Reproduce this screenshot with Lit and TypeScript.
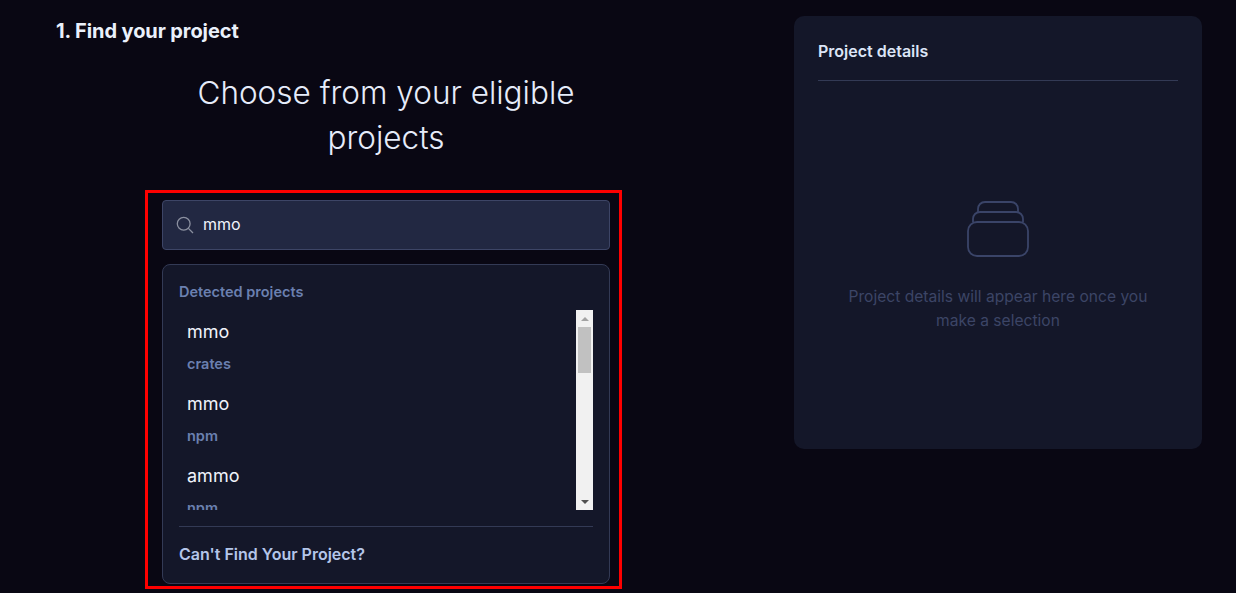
import { LitElement, html, css } from "lit";
import { customElement } from "lit/decorators.js";

const projects = [
  { name: "mmo", src: "crates" },
  { name: "mmo", src: "npm" },
  { name: "ammo", src: "npm" },
];

@customElement("app-root")
export class AppRoot extends LitElement {
  static styles = css`
    :host {
      display: block;
      width: 1236px;
      height: 593px;
      overflow: hidden;
      background: #090713;
      font-family: "Inter", "Liberation Sans", sans-serif;
      color: #e6ecfa;
    }
    .page {
      position: relative;
      display: grid;
      grid-template-columns: 772px 408px;
      column-gap: 22px;
      height: 593px;
    }
    .left {
      display: flex;
      flex-direction: column;
      align-items: center;
    }
    .step {
      align-self: flex-start;
      margin: 19px 0 0 56px;
      font-size: 20px;
      line-height: 24px;
      font-weight: 700;
      color: #eaf0fb;
      letter-spacing: -0.1px;
    }
    h1 {
      margin: 27px 0 0;
      width: 420px;
      text-align: center;
      font-family: "Inter", "Liberation Sans", sans-serif;
      font-weight: 300;
      font-size: 31.5px;
      line-height: 45px;
      color: #e6ecfa;
    }
    .search {
      box-sizing: border-box;
      width: 448px;
      height: 50px;
      margin-top: 40px;
      display: flex;
      align-items: center;
      gap: 9px;
      padding: 0 0 3px 13px;
      background: #222842;
      border: 1px solid #3d4566;
      border-radius: 4px;
      font-size: 16px;
      color: #f0f3fb;
    }
    .search svg { display: block; margin-top: 3px; }
    .card {
      box-sizing: border-box;
      width: 448px;
      height: 320px;
      margin-top: 14px;
      padding: 17px 16px 0;
      background: #141729;
      border: 1px solid #333a55;
      border-radius: 8px;
    }
    .label {
      font-size: 14.5px;
      line-height: 20px;
      font-weight: 600;
      color: #6b80b0;
    }
    .body {
      display: flex;
      height: 200px;
      margin-top: 8px;
    }
    .list {
      flex: 1;
      overflow: hidden;
      padding-left: 8px;
    }
    .item {
      box-sizing: border-box;
      height: 72px;
      padding-top: 10px;
    }
    .name {
      font-size: 18px;
      line-height: 24px;
      color: #f0f3fb;
    }
    .src {
      margin-top: 10px;
      font-size: 14.5px;
      line-height: 20px;
      font-weight: 600;
      color: #6b80b0;
    }
    .scrollbar {
      width: 17px;
      background: #f1f1f1;
      display: flex;
      flex-direction: column;
      align-items: center;
    }
    .arrow-box {
      height: 17px;
      display: flex;
      align-items: center;
      justify-content: center;
    }
    .thumb {
      width: 13px;
      height: 46px;
      background: #c1c1c1;
    }
    .spacer { flex: 1; }
    .up { width: 0; height: 0; border: 4px solid transparent; border-top: 0; border-bottom: 4px solid #a3a3a3; }
    .down { width: 0; height: 0; border: 4px solid transparent; border-bottom: 0; border-top: 4px solid #505050; }
    .divider {
      height: 1px;
      margin-top: 16px;
      background: #333a55;
    }
    .cant {
      margin-top: 16px;
      font-size: 16px;
      line-height: 22px;
      font-weight: 600;
      color: #b4c6ea;
    }
    .panel {
      box-sizing: border-box;
      height: 433px;
      margin-top: 16px;
      padding: 0 24px;
      background: #141729;
      border-radius: 10px;
      display: flex;
      flex-direction: column;
    }
    .panel-title {
      height: 65px;
      box-sizing: border-box;
      padding-top: 24px;
      border-bottom: 1px solid #333a55;
      font-size: 16px;
      line-height: 22px;
      font-weight: 600;
      color: #dce5f7;
      width: 360px;
    }
    .empty {
      margin-top: 118px;
      width: 360px;
      display: flex;
      flex-direction: column;
      align-items: center;
    }
    .empty svg { display: block; }
    .empty p {
      margin: 26px 0 0;
      width: 320px;
      text-align: center;
      font-size: 15.6px;
      line-height: 24px;
      color: #3c4566;
    }
    .mark {
      position: absolute;
      left: 145px;
      top: 190px;
      width: 477px;
      height: 399px;
      box-sizing: border-box;
      border: 3px solid #fe0000;
      pointer-events: none;
    }
  `;

  render() {
    return html`
      <div class="page">
        <section class="left">
          <div class="step">1. Find your project</div>
          <h1>Choose from your eligible projects</h1>
          <div class="search">
            <svg width="18" height="18" viewBox="0 0 18 18" fill="none" stroke="#8b90a0" stroke-width="1.3">
              <circle cx="7.7" cy="7.7" r="6.4"></circle>
              <path d="M12.4 12.4 17 17"></path>
            </svg>
            <span>mmo</span>
          </div>
          <div class="card">
            <div class="label">Detected projects</div>
            <div class="body">
              <div class="list">
                ${projects.map(
                  (p) => html`<div class="item">
                    <div class="name">${p.name}</div>
                    <div class="src">${p.src}</div>
                  </div>`
                )}
              </div>
              <div class="scrollbar">
                <div class="arrow-box"><div class="up"></div></div>
                <div class="thumb"></div>
                <div class="spacer"></div>
                <div class="arrow-box"><div class="down"></div></div>
              </div>
            </div>
            <div class="divider"></div>
            <div class="cant">Can't Find Your Project?</div>
          </div>
        </section>
        <aside class="panel">
          <div class="panel-title">Project details</div>
          <div class="empty">
            <svg width="64" height="60" viewBox="0 0 64 60" fill="none" stroke="#3a4468" stroke-width="1.8">
              <rect x="2" y="23" width="60" height="34" rx="9"></rect>
              <path d="M7 23v-3c0-4 3-7 7-7h36c4 0 7 3 7 7v3"></path>
              <path d="M12 13v-3c0-4 3-7 7-7h26c4 0 7 3 7 7v3"></path>
            </svg>
            <p>Project details will appear here once you make a selection</p>
          </div>
        </aside>
        <div class="mark"></div>
      </div>
    `;
  }
}
